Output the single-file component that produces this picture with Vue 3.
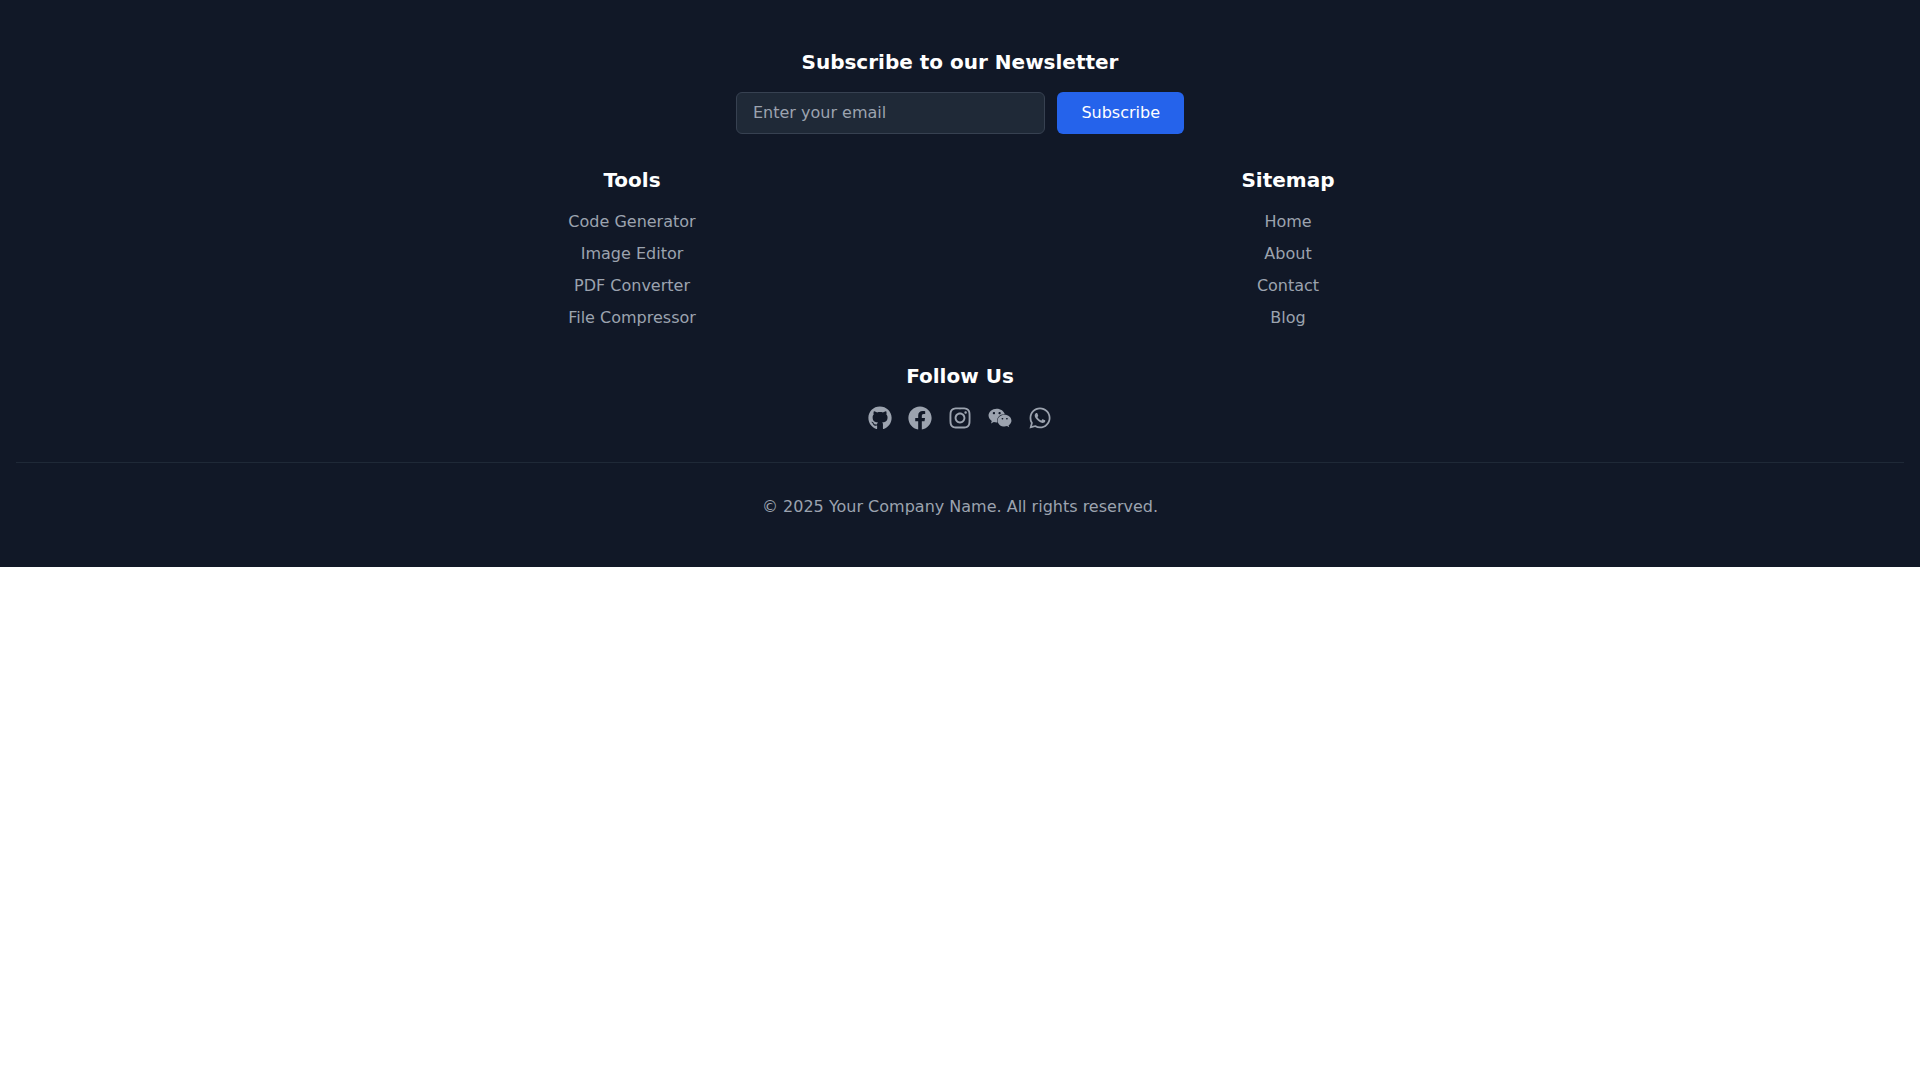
<script setup>
import { ref } from 'vue'

const email = ref('')

const columns = [
  { title: 'Tools', links: ['Code Generator', 'Image Editor', 'PDF Converter', 'File Compressor'] },
  { title: 'Sitemap', links: ['Home', 'About', 'Contact', 'Blog'] },
]

const socials = [
  {
    name: 'GitHub',
    viewBox: '0 0 496 512',
    path: 'M165.9 397.4c0 2-2.3 3.6-5.2 3.6-3.3.3-5.6-1.3-5.6-3.6 0-2 2.3-3.6 5.2-3.6 3-.3 5.6 1.3 5.6 3.6zm-31.1-4.5c-.7 2 1.3 4.3 4.3 4.9 2.6 1 5.6 0 6.2-2s-1.3-4.3-4.3-5.2c-2.6-.7-5.5.3-6.2 2.3zm44.2-1.7c-2.9.7-4.9 2.6-4.6 4.9.3 2 2.9 3.3 5.9 2.6 2.9-.7 4.9-2.6 4.6-4.6-.3-1.9-3-3.2-5.9-2.9zM244.8 8C106.1 8 0 113.3 0 252c0 110.9 69.8 205.8 169.5 239.2 12.8 2.3 17.3-5.6 17.3-12.1 0-6.2-.3-40.4-.3-61.4 0 0-70 15-84.7-29.8 0 0-11.4-29.1-27.8-36.6 0 0-22.9-15.7 1.6-15.4 0 0 24.9 2 38.6 25.8 21.9 38.6 58.6 27.5 72.9 20.9 2.3-16 8.8-27.1 16-33.7-55.9-6.2-112.3-14.3-112.3-110.5 0-27.5 7.6-41.3 23.6-58.9-2.6-6.5-11.1-33.3 2.6-67.9 20.9-6.5 69 27 69 27 20-5.6 41.5-8.5 62.8-8.5s42.8 2.9 62.8 8.5c0 0 48.1-33.6 69-27 13.7 34.7 5.2 61.4 2.6 67.9 16 17.7 25.8 31.5 25.8 58.9 0 96.5-58.9 104.2-114.8 110.5 9.2 7.9 17 22.9 17 46.4 0 33.7-.3 75.4-.3 83.6 0 6.5 4.6 14.4 17.3 12.1C428.2 457.8 496 362.9 496 252 496 113.3 383.5 8 244.8 8zM97.2 352.9c-1.3 1-1 3.3.7 5.2 1.6 1.6 3.9 2.3 5.2 1 1.3-1 1-3.3-.7-5.2-1.6-1.6-3.9-2.3-5.2-1zm-10.8-8.1c-.7 1.3.3 2.9 2.3 3.9 1.6 1 3.6.7 4.3-.7.7-1.3-.3-2.9-2.3-3.9-2-.6-3.6-.3-4.3.7zm32.4 35.6c-1.6 1.3-1 4.3 1.3 6.2 2.3 2.3 5.2 2.6 6.5 1 1.3-1.3.7-4.3-1.3-6.2-2.2-2.3-5.2-2.6-6.5-1zm-11.4-14.7c-1.6 1-1.6 3.6 0 5.9 1.6 2.3 4.3 3.3 5.6 2.3 1.6-1.3 1.6-3.9 0-6.2-1.4-2.3-4-3.3-5.6-2z',
  },
  {
    name: 'Facebook',
    viewBox: '0 0 512 512',
    path: 'M504 256C504 119 393 8 256 8S8 119 8 256c0 123.78 90.69 226.38 209.25 245V327.69h-63V256h63v-54.64c0-62.15 37-96.48 93.67-96.48 27.14 0 55.52 4.84 55.52 4.84v61h-31.28c-30.8 0-40.41 19.12-40.41 38.73V256h68.78l-11 71.69h-57.78V501C413.31 482.38 504 379.78 504 256z',
  },
  {
    name: 'Instagram',
    viewBox: '0 0 448 512',
    path: 'M224.1 141c-63.6 0-114.9 51.3-114.9 114.9s51.3 114.9 114.9 114.9S339 319.5 339 255.9 287.7 141 224.1 141zm0 189.6c-41.1 0-74.7-33.5-74.7-74.7s33.5-74.7 74.7-74.7 74.7 33.5 74.7 74.7-33.6 74.7-74.7 74.7zm146.4-194.3c0 14.9-12 26.8-26.8 26.8-14.9 0-26.8-12-26.8-26.8s12-26.8 26.8-26.8 26.8 12 26.8 26.8zm76.1 27.2c-1.7-35.9-9.9-67.7-36.2-93.9-26.2-26.2-58-34.4-93.9-36.2-37-2.1-147.9-2.1-184.9 0-35.8 1.7-67.6 9.9-93.9 36.1s-34.4 58-36.2 93.9c-2.1 37-2.1 147.9 0 184.9 1.7 35.9 9.9 67.7 36.2 93.9s58 34.4 93.9 36.2c37 2.1 147.9 2.1 184.9 0 35.9-1.7 67.7-9.9 93.9-36.2 26.2-26.2 34.4-58 36.2-93.9 2.1-37 2.1-147.8 0-184.8zM398.8 388c-7.8 19.6-22.9 34.7-42.6 42.6-29.5 11.7-99.5 9-132.1 9s-102.7 2.6-132.1-9c-19.6-7.8-34.7-22.9-42.6-42.6-11.7-29.5-9-99.5-9-132.1s-2.6-102.7 9-132.1c7.8-19.6 22.9-34.7 42.6-42.6 29.5-11.7 99.5-9 132.1-9s102.7-2.6 132.1 9c19.6 7.8 34.7 22.9 42.6 42.6 11.7 29.5 9 99.5 9 132.1s2.7 102.7-9 132.1z',
  },
  {
    name: 'WeChat',
    viewBox: '0 0 576 512',
    path: 'M385.2 167.6c6.4 0 12.6.3 18.8 1.1C387.4 90.3 303.3 32 207.7 32 100.5 32 13 104.8 13 197.4c0 53.4 29.3 97.5 77.9 131.6l-19.3 58.6 68-34.1c24.4 4.8 43.8 9.7 68.2 9.7 6.2 0 12.1-.3 18.3-.8-4-12.9-6.2-26.6-6.2-40.8-.1-84.9 72.9-154 165.3-154zm-104.5-52.9c14.5 0 24.2 9.7 24.2 24.4 0 14.5-9.7 24.2-24.2 24.2-14.8 0-29.3-9.7-29.3-24.2.1-14.7 14.6-24.4 29.3-24.4zm-136.4 48.6c-14.5 0-29.3-9.7-29.3-24.2 0-14.8 14.8-24.4 29.3-24.4 14.8 0 24.4 9.7 24.4 24.4 0 14.6-9.6 24.2-24.4 24.2zM563 319.4c0-77.9-77.9-141.3-165.4-141.3-92.7 0-165.4 63.4-165.4 141.3S305 460.7 397.6 460.7c19.3 0 38.9-5.1 58.6-9.9l53.4 29.3-14.8-48.6C534 402.1 563 363.2 563 319.4zm-219.1-24.5c-9.5 0-19.3-9.5-19.3-19.3 0-9.5 9.7-19.3 19.3-19.3 14.8 0 24.4 9.7 24.4 19.3 0 10-9.7 19.3-24.4 19.3zm107.1 0c-9.5 0-19.3-9.5-19.3-19.3 0-9.5 9.7-19.3 19.3-19.3 14.5 0 24.4 9.7 24.4 19.3 0 10-9.9 19.3-24.4 19.3z',
  },
  {
    name: 'WhatsApp',
    viewBox: '0 0 448 512',
    path: 'M380.9 97.1C339 55.1 283.2 32 223.9 32c-122.4 0-222 99.6-222 222 0 39.1 10.2 77.3 29.6 111L0 480l117.7-30.9c32.4 17.7 68.9 27 106.1 27h.1c122.3 0 224.1-99.6 224.1-222 0-59.3-25.2-115-67.1-157zm-157 341.6c-33.2 0-65.7-8.9-94-25.7l-6.7-4-69.8 18.3L72 359.2l-4.4-7c-18.5-29.4-28.2-63.3-28.2-98.2 0-101.7 82.8-184.5 184.6-184.5 49.3 0 95.6 19.2 130.4 54.1 34.8 34.9 56.2 81.2 56.1 130.5 0 101.8-84.9 184.6-186.6 184.6zm101.2-138.2c-5.5-2.8-32.8-16.2-37.9-18-5.1-1.9-8.8-2.8-12.5 2.8-3.7 5.6-14.3 18-17.6 21.8-3.2 3.7-6.5 4.2-12 1.4-32.6-16.3-54-29.1-75.5-66-5.7-9.8 5.7-9.1 16.3-30.3 1.8-3.7.9-6.9-.5-9.7-1.4-2.8-12.5-30.1-17.1-41.2-4.5-10.8-9.1-9.3-12.5-9.5-3.2-.2-6.9-.2-10.6-.2-3.7 0-9.7 1.4-14.8 6.9-5.1 5.6-19.4 19-19.4 46.3 0 27.3 19.9 53.7 22.6 57.4 2.8 3.7 39.1 59.7 94.8 83.8 35.2 15.2 49 16.5 66.6 13.9 10.7-1.6 32.8-13.4 37.4-26.4 4.6-13 4.6-24.1 3.2-26.4-1.3-2.5-5-3.9-10.5-6.6z',
  },
]
</script>

<template>
  <footer class="footer">
    <section class="newsletter">
      <h3 class="heading">Subscribe to our Newsletter</h3>
      <form class="form" @submit.prevent>
        <input v-model="email" class="field" type="email" placeholder="Enter your email" aria-label="Email address" />
        <button class="submit" type="submit">Subscribe</button>
      </form>
    </section>

    <div class="columns">
      <nav v-for="column in columns" :key="column.title" :aria-label="column.title">
        <h3 class="heading">{{ column.title }}</h3>
        <ul class="links">
          <li v-for="link in column.links" :key="link">
            <a class="link" href="#">{{ link }}</a>
          </li>
        </ul>
      </nav>
    </div>

    <section class="follow">
      <h3 class="heading">Follow Us</h3>
      <div class="socials">
        <a v-for="social in socials" :key="social.name" class="social" href="#" :aria-label="social.name">
          <svg class="icon" :viewBox="social.viewBox" fill="currentColor" aria-hidden="true">
            <path :d="social.path" />
          </svg>
        </a>
      </div>
    </section>

    <div class="legal">
      <p class="copyright">© 2025 Your Company Name. All rights reserved.</p>
    </div>
  </footer>
</template>

<style>
body {
  margin: 0;
  background: #ffffff;
}
</style>

<style scoped>
.footer {
  display: flex;
  flex-direction: column;
  gap: 32px;
  padding: 48px 16px;
  background: #111827;
  color: #9ca3af;
  font-family: "DejaVu Sans", sans-serif;
  font-size: 16px;
  line-height: 24px;
  text-align: center;
}

.heading {
  margin: 0 0 16px;
  color: #ffffff;
  font-size: 20px;
  font-weight: 700;
  line-height: 28px;
}

.form {
  display: flex;
  gap: 12px;
  max-width: 448px;
  margin: 0 auto;
}

.field {
  flex: 1;
  min-width: 0;
  padding: 8px 16px;
  border: 1px solid #374151;
  border-radius: 6px;
  background: #1f2937;
  color: #ffffff;
  font: inherit;
}

.field::placeholder {
  color: #9ca3af;
  opacity: 1;
}

.submit {
  padding: 8px 24px;
  border: 0;
  border-radius: 6px;
  background: #2563eb;
  color: #ffffff;
  font: inherit;
  cursor: pointer;
}

.submit:hover {
  background: #1d4ed8;
}

.columns {
  display: grid;
  grid-template-columns: repeat(2, 1fr);
  gap: 32px;
  width: 100%;
  max-width: 1280px;
  margin: 0 auto;
}

.links {
  display: flex;
  flex-direction: column;
  gap: 8px;
  margin: 0;
  padding: 0;
  list-style: none;
}

.link,
.social {
  color: inherit;
  text-decoration: none;
}

.link:hover,
.social:hover {
  color: #ffffff;
}

.socials {
  display: flex;
  justify-content: center;
  gap: 16px;
}

.icon {
  display: block;
  width: 24px;
  height: 24px;
}

.legal {
  padding-top: 32px;
  border-top: 1px solid #1f2937;
}

.copyright {
  margin: 0;
}
</style>
